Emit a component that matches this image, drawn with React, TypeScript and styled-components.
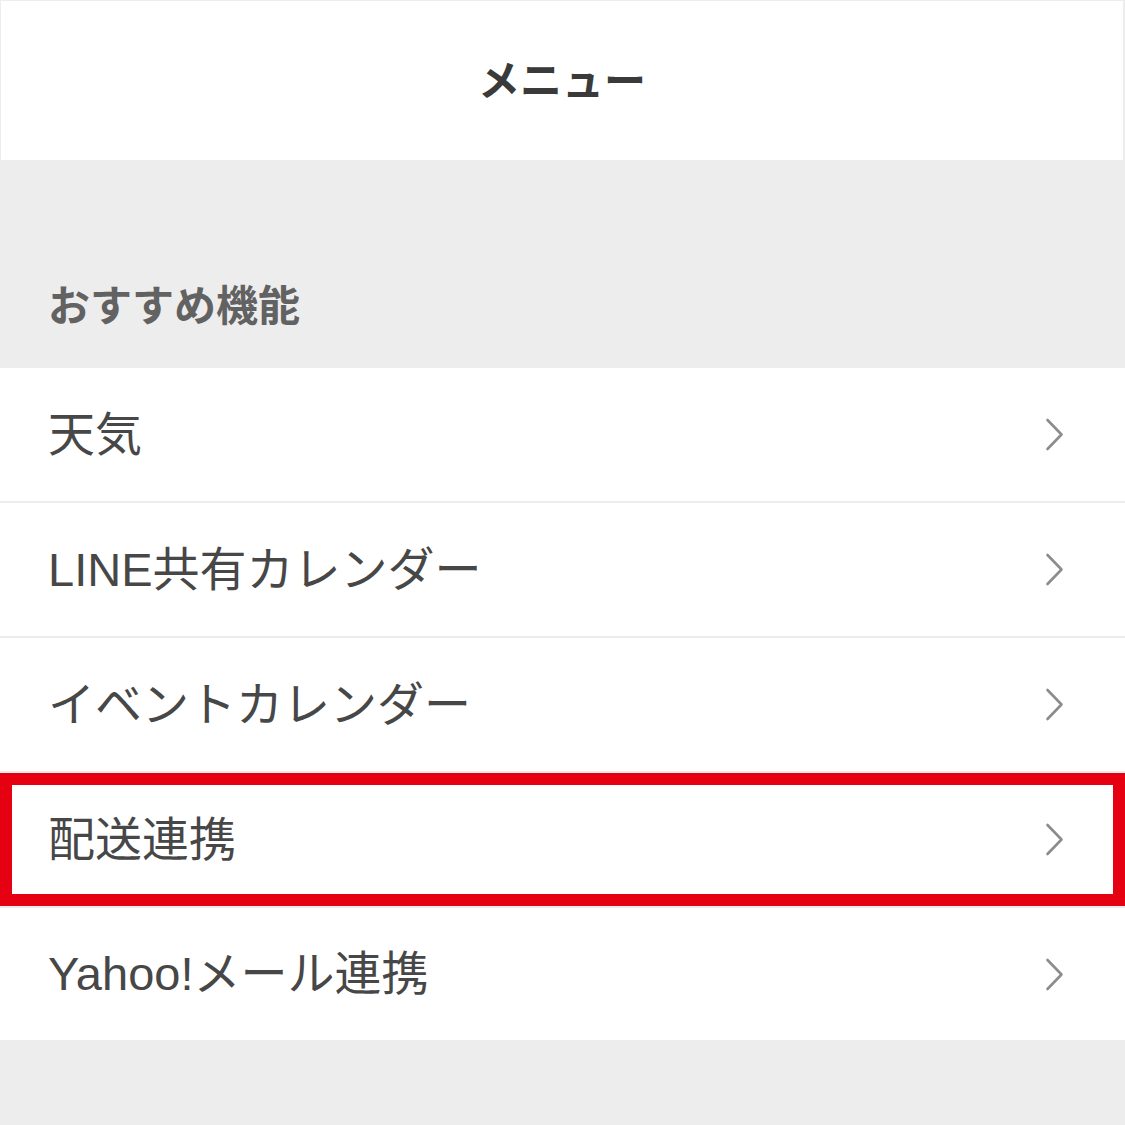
import React from "react";
import styled, { createGlobalStyle } from "styled-components";

const GlobalStyle = createGlobalStyle`
  html, body {
    margin: 0;
    padding: 0;
    background: #ededed;
  }
  body {
    font-family: "Liberation Sans", "Noto Sans CJK JP", sans-serif;
  }
  * { box-sizing: border-box; }
`;

const Page = styled.div`
  width: 1125px;
  min-height: 1125px;
  background: #ededed;
  display: flex;
  flex-direction: column;
`;

const Header = styled.header`
  height: 160px;
  background: #ffffff;
  border-top: 1px solid #ededed;
  border-left: 1px solid #ededed;
  border-right: 2px solid #ededed;
  display: flex;
  align-items: center;
  justify-content: center;
  padding-bottom: 6px;
`;

const Title = styled.h1`
  margin: 0;
  font-family: "Noto Sans CJK JP", sans-serif;
  font-size: 42px;
  font-weight: 700;
  color: #3a3a3a;
  letter-spacing: 0;
`;

const SectionHeader = styled.div`
  height: 208px;
  padding: 113px 0 0 48px;
`;

const SectionTitle = styled.h2`
  margin: 0;
  font-family: "Noto Sans CJK JP", sans-serif;
  font-size: 42px;
  line-height: 60px;
  font-weight: 700;
  color: #626262;
`;

const List = styled.ul`
  list-style: none;
  margin: 0;
  padding: 0;
  background: #ffffff;
`;

const Row = styled.li<{ $highlight?: boolean; $last?: boolean }>`
  height: ${(p) => (p.$last ? "132px" : "135px")};
  border-bottom: ${(p) => (p.$last ? "none" : "2px solid #ededed")};
  display: flex;
  align-items: center;
  justify-content: space-between;
  padding: 0 61px 0 48px;
  background: #ffffff;
  position: relative;
  ${(p) =>
    p.$highlight
      ? `
    &::after {
      content: "";
      position: absolute;
      left: 0;
      right: 0;
      top: 0;
      bottom: 0;
      border: 12px solid #e50012;
      pointer-events: none;
    }
  `
      : ""}
`;

const Label = styled.span`
  font-family: "Liberation Sans", "Noto Sans CJK JP", sans-serif;
  font-size: 47px;
  line-height: 60px;
  color: #474747;
  white-space: nowrap;
`;

const Chevron = () => (
  <svg width="19" height="33" viewBox="0 0 19 33" fill="none">
    <polyline
      points="2.5,2 16.5,16.5 2.5,31"
      stroke="#8c8c8c"
      strokeWidth="2.6"
      strokeLinecap="round"
      strokeLinejoin="round"
    />
  </svg>
);

const items = [
  { label: "天気" },
  { label: "LINE共有カレンダー" },
  { label: "イベントカレンダー" },
  { label: "配送連携", highlight: true },
  { label: "Yahoo!メール連携" },
];

export default function App() {
  return (
    <>
      <GlobalStyle />
      <Page>
        <Header>
          <Title>メニュー</Title>
        </Header>
        <SectionHeader>
          <SectionTitle>おすすめ機能</SectionTitle>
        </SectionHeader>
        <List>
          {items.map((it, i) => (
            <Row key={it.label} $highlight={it.highlight} $last={i === items.length - 1}>
              <Label>{it.label}</Label>
              <Chevron />
            </Row>
          ))}
        </List>
      </Page>
    </>
  );
}
